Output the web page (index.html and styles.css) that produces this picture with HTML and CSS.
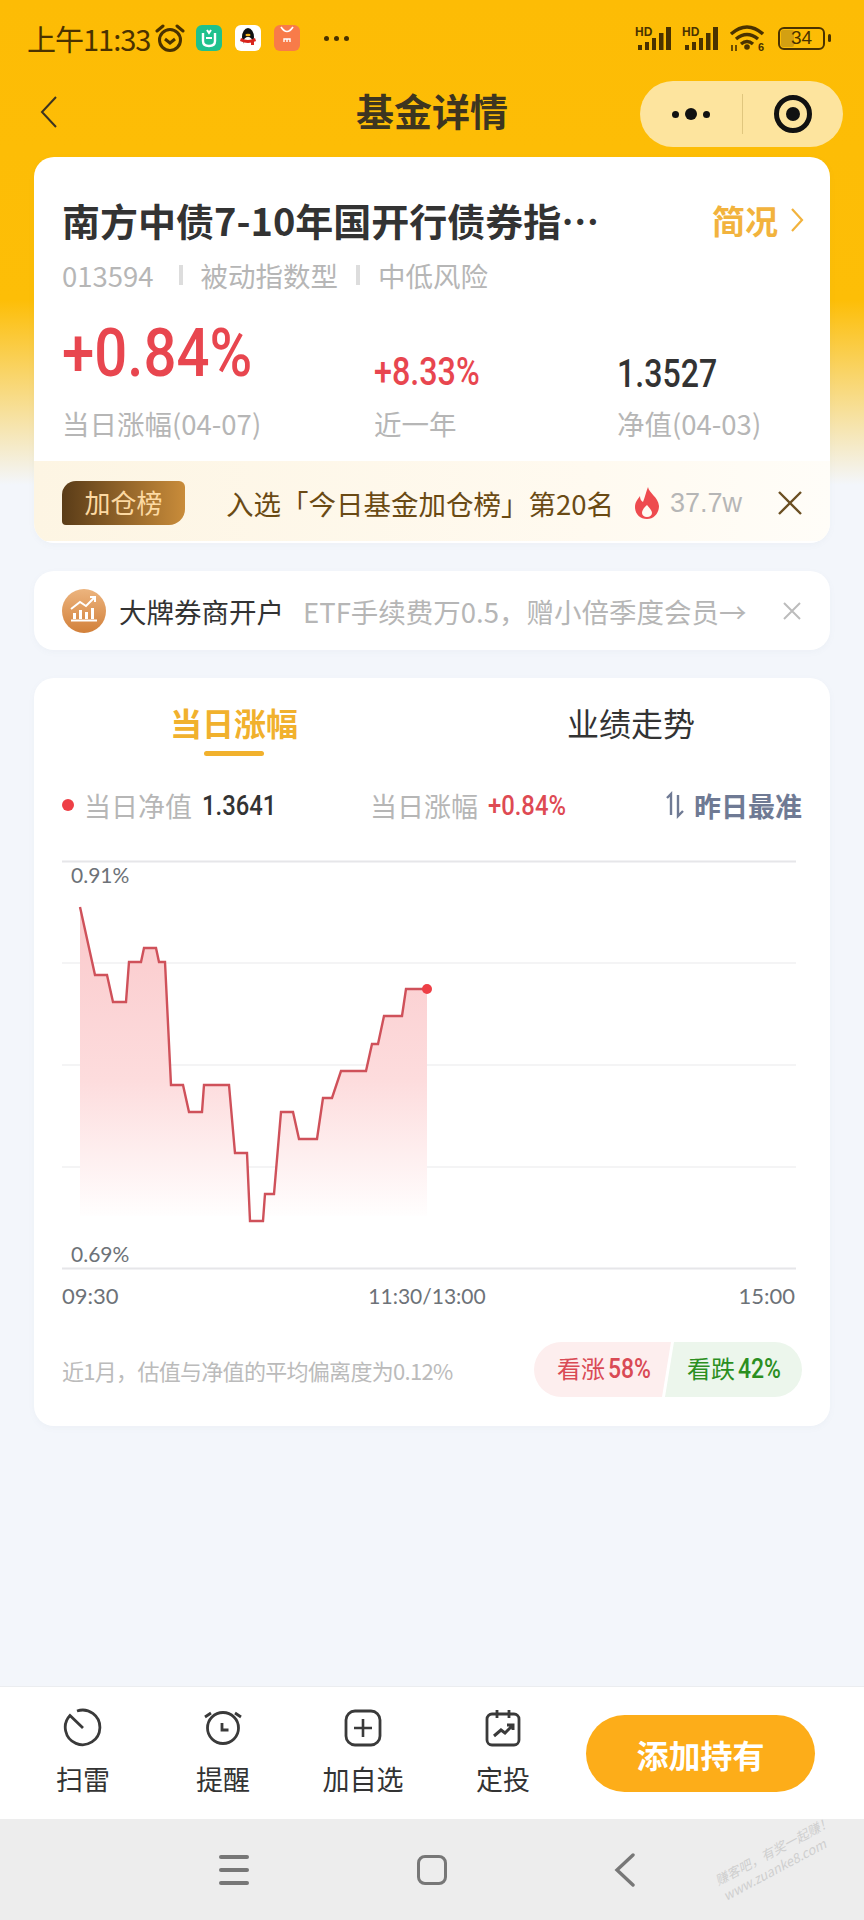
FILE: index.html
```html
<!DOCTYPE html>
<html>
  <head>
    <meta charset="UTF-8">
    <meta name="viewport" content="width=864, user-scalable=no">
    <title>基金详情</title>
    <link rel="stylesheet" href="styles.css">
  </head>
  <body>
    <div class="page">
      <div class="status-bar">
        <div class="status-left">
          <span class="clock">上午11:33</span>
          <svg class="alarm" width="30" height="28" viewBox="0 0 30 28">
            <circle cx="15" cy="16" r="10.5" fill="none" stroke="#4a3200" stroke-width="3"/>
            <path d="M10 15l5 4 5-4" fill="none" stroke="#4a3200" stroke-width="3"/>
            <path d="M2 7l6-5M28 7l-6-5" stroke="#4a3200" stroke-width="3" stroke-linecap="round"/>
          </svg>
          <span class="app-icon app-mi">
            <svg width="26" height="26" viewBox="0 0 26 26">
              <path d="M7 8v8q0 5 6 5t6-5V8" fill="none" stroke="#fff" stroke-width="2.4"/>
              <path d="M11 5l2 3 2-3" fill="none" stroke="#fff" stroke-width="2"/>
              <path d="M10 13h6" stroke="#fff" stroke-width="2"/>
            </svg>
          </span>
          <span class="app-icon app-qq">
            <svg width="26" height="26" viewBox="0 0 26 26">
              <ellipse cx="13" cy="12" rx="6" ry="9" fill="#111"/>
              <ellipse cx="13" cy="17" rx="4.5" ry="5" fill="#fff"/>
              <path d="M6 13q7 4 14 0l1 3q-8 4-16 0z" fill="#d8241c"/>
              <path d="M16 15h3v5h-3z" fill="#d8241c"/>
              <ellipse cx="13" cy="10" rx="2.6" ry="1.3" fill="#f5b21a"/>
            </svg>
          </span>
          <span class="app-icon app-shop">
            <svg width="26" height="26" viewBox="0 0 26 26">
              <path d="M7 2q6 9 12 0" fill="none" stroke="#fff" stroke-width="1.6"/>
              <path d="M10 17v-3h6v3M13 14v3" fill="none" stroke="#fff" stroke-width="1.4"/>
            </svg>
          </span>
          <span class="more-dots"><i></i><i></i><i></i></span>
        </div>
        <div class="status-right">
          <svg width="38" height="26" viewBox="0 0 38 26">
            <text x="0" y="11" class="hd-label">HD</text>
            <path d="M3 20h4v5H3zM10 17h4v8h-4zM17 13h4v12h-4zM24 8h4.500v17h-4.500zM31 2h5v23h-5z" fill="#4a3200"/>
          </svg>
          <svg width="38" height="26" viewBox="0 0 38 26">
            <text x="0" y="11" class="hd-label">HD</text>
            <path d="M3 20h4v5H3zM10 17h4v8h-4zM17 13h4v12h-4zM24 8h4.500v17h-4.500zM31 2h5v23h-5z" fill="#4a3200"/>
          </svg>
          <svg class="wifi" width="36" height="28" viewBox="0 0 36 28">
            <path d="M2 10q16-14 32 0M7 15q11-9 22 0M12 20q6-5 12 0" fill="none" stroke="#4a3200" stroke-width="3.4"/>
            <circle cx="18" cy="23" r="2.8" fill="#4a3200"/>
            <path d="M3 21v6M7 27v-6" stroke="#4a3200" stroke-width="1.6"/>
            <text x="29" y="27" class="wifi-six">6</text>
          </svg>
          <div class="battery"><span class="battery-level"></span><span class="battery-num">34</span></div>
          <span class="battery-nub"></span>
        </div>
      </div>

      <div class="nav-bar">
        <svg class="nav-back" width="20" height="34" viewBox="0 0 20 34">
          <path d="M17 2L3 17l14 15" fill="none" stroke="#3c3320" stroke-width="2"/>
        </svg>
        <div class="nav-title">基金详情</div>
        <div class="capsule">
          <div class="capsule-dots"><i></i><b></b><i></i></div>
          <div class="capsule-line"></div>
          <div class="capsule-target"><span></span></div>
        </div>
      </div>

      <div class="content">
        <div class="card fund-card">
          <div class="fund-head">
            <div class="fund-name">南方中债7-10年国开行债券指…</div>
            <div class="fund-brief">简况
              <svg width="14" height="26" viewBox="0 0 14 26">
                <path d="M2 2l10 11L2 24" fill="none" stroke="#f2b33d" stroke-width="2.2"/>
              </svg>
            </div>
          </div>
          <div class="fund-tags">
            <span>013594</span><i></i><span>被动指数型</span><i></i><span>中低风险</span>
          </div>
          <div class="stats">
            <div class="stat">
              <div class="stat-value stat-big">+0.84%</div>
              <div class="stat-label">当日涨幅(04-07)</div>
            </div>
            <div class="stat">
              <div class="stat-value stat-red">+8.33%</div>
              <div class="stat-label">近一年</div>
            </div>
            <div class="stat">
              <div class="stat-value stat-dark">1.3527</div>
              <div class="stat-label">净值(04-03)</div>
            </div>
          </div>
          <div class="rank-band">
            <span class="rank-badge">加仓榜</span>
            <span class="rank-text">入选「今日基金加仓榜」第20名</span>
            <svg class="flame" width="26" height="32" viewBox="0 0 26 32">
              <path d="M14 0c1 6 10 10 11 19 0 7-5 13-12 13S1 27 1 20c0-5 3-8 5-11 0 3 1 5 3 6 2-5 3-10 5-15zM13 18c-3 3-5 5-5 8 0 2 2 4 5 4s5-2 5-4c0-3-3-5-5-8z" fill="#ee4b4f"/>
            </svg>
            <span class="rank-heat">37.7w</span>
            <svg class="rank-close" width="26" height="26" viewBox="0 0 26 26">
              <path d="M2 2l22 22M24 2L2 24" stroke="#6b4f22" stroke-width="2.4"/>
            </svg>
          </div>
        </div>

        <div class="card promo-card">
          <span class="promo-icon">
            <svg width="44" height="44" viewBox="0 0 44 44">
              <path d="M11 30v-6h3v6zM17 30v-9h3v9zM23 30v-7h3v7zM29 30V19h3v11z" fill="#fff"/>
              <path d="M9 31.500h26" stroke="#fff" stroke-width="2"/>
              <path d="M9 20l9-7 6 4 9-9M28 8h5v5" fill="none" stroke="#fff" stroke-width="2"/>
            </svg>
          </span>
          <span class="promo-title">大牌券商开户</span>
          <span class="promo-text">ETF手续费万0.5，赠小倍季度会员→</span>
          <svg class="promo-close" width="20" height="20" viewBox="0 0 20 20">
            <path d="M2 2l16 16M18 2L2 18" stroke="#bcbcbc" stroke-width="2"/>
          </svg>
        </div>

        <div class="card chart-card">
          <div class="tabs">
            <div class="tab tab-active">当日涨幅</div>
            <div class="tab">业绩走势</div>
          </div>
          <div class="legend">
            <div class="legend-net"><i class="legend-dot"></i><span>当日净值</span><b>1.3641</b></div>
            <div class="legend-rise"><span>当日涨幅</span><b>+0.84%</b></div>
            <div class="legend-best">
              <svg width="20" height="28" viewBox="0 0 20 28">
                <path d="M2 7l4-4v21" fill="none" stroke="#6f7a94" stroke-width="2.4"/>
                <path d="M13 4v21l5-5" fill="none" stroke="#6f7a94" stroke-width="2.4"/>
              </svg>
              <span>昨日最准</span>
            </div>
          </div>
          <svg class="chart" width="734" height="452" viewBox="62 858 734 452">
            <defs>
              <linearGradient id="areaFill" x1="0" y1="0" x2="0" y2="1">
                <stop offset="0" stop-color="#fac9cb"/>
                <stop offset="0.55" stop-color="#fddcdd"/>
                <stop offset="1" stop-color="#ffffff"/>
              </linearGradient>
            </defs>
            <path d="M62 862.500H796" class="grid-edge"/>
            <path d="M62 964H796M62 1066H796M62 1168H796" class="grid-line"/>
            <path d="M62 1269.500H796" class="grid-edge"/>
            <text x="71" y="884" class="axis-pct">0.91%</text>
            <text x="71" y="1263" class="axis-pct">0.69%</text>
            <path d="M80 908L95 976H107L113 1003H126L129 963H141L144 949H156L159 963H165L171 1086H183L189 1113H202L204 1086H229L235 1154H247L250 1222H263L265 1195H274L281 1113H293L299 1140H317L323 1099H332L341 1072H366L372 1045H378L384 1017H402L406 990H427V1217H80Z" fill="url(#areaFill)"/>
            <path d="M80 908L95 976H107L113 1003H126L129 963H141L144 949H156L159 963H165L171 1086H183L189 1113H202L204 1086H229L235 1154H247L250 1222H263L265 1195H274L281 1113H293L299 1140H317L323 1099H332L341 1072H366L372 1045H378L384 1017H402L406 990H427" fill="none" stroke="#cf515a" stroke-width="2.4"/>
            <circle cx="427" cy="990" r="5" fill="#ee3f46"/>
            <text x="62" y="1305" class="axis-time">09:30</text>
            <text x="427" y="1305" class="axis-time axis-mid" text-anchor="middle">11:30/13:00</text>
            <text x="795" y="1305" class="axis-time" text-anchor="end">15:00</text>
          </svg>
          <div class="chart-foot">
            <span class="foot-note">近1月，估值与净值的平均偏离度为0.12%</span>
            <div class="vote">
              <div class="vote-up">看涨<b>58%</b></div>
              <div class="vote-down">看跌<b>42%</b></div>
            </div>
          </div>
        </div>
      </div>

      <div class="action-bar">
        <div class="action">
          <svg width="40" height="40" viewBox="0 0 40 40">
            <path d="M14 3A17.300 17.300 0 1 1 7 7.500L20 20" fill="none" stroke="#3a3a3a" stroke-width="2.800"/>
          </svg>
          <span>扫雷</span>
        </div>
        <div class="action">
          <svg width="40" height="40" viewBox="0 0 40 40">
            <circle cx="20" cy="20" r="15.500" fill="none" stroke="#3a3a3a" stroke-width="2.800"/>
            <path d="M19 15v7h6.500" fill="none" stroke="#3a3a3a" stroke-width="2.800"/>
            <path d="M2 9l6-4M38 9l-6-4" stroke="#3a3a3a" stroke-width="2.800"/>
          </svg>
          <span>提醒</span>
        </div>
        <div class="action">
          <svg width="40" height="40" viewBox="0 0 40 40">
            <rect x="3" y="3" width="34" height="34" rx="9" fill="none" stroke="#3a3a3a" stroke-width="2.800"/>
            <path d="M20 11v18M11 20h18" stroke="#3a3a3a" stroke-width="2.600"/>
          </svg>
          <span>加自选</span>
        </div>
        <div class="action">
          <svg width="40" height="40" viewBox="0 0 40 40">
            <rect x="4" y="6" width="32" height="31" rx="5" fill="none" stroke="#3a3a3a" stroke-width="2.800"/>
            <path d="M14 2v8M26 2v8" stroke="#3a3a3a" stroke-width="2.800"/>
            <path d="M11 28l7-6 4 3 7-7M24 17h6v5" fill="none" stroke="#3a3a3a" stroke-width="3"/>
          </svg>
          <span>定投</span>
        </div>
        <button class="add-btn">添加持有</button>
      </div>

      <div class="system-nav">
        <div class="sys-menu"><i></i><i></i><i></i></div>
        <div class="sys-home"></div>
        <svg width="22" height="34" viewBox="0 0 22 34">
          <path d="M19 2L3 17l16 15" fill="none" stroke="#777" stroke-width="3.400" stroke-linecap="round"/>
        </svg>
        <div class="watermark">赚客吧，有奖一起赚！<br>www.zuanke8.com</div>
      </div>
    </div>
  </body>
</html>
```

FILE: styles.css
```css
* {
  box-sizing: border-box;
}
body {
  margin: 0;
  font-family: "Noto Sans CJK SC", "Noto Sans", sans-serif;
  color: #333;
}
.page {
  position: relative;
  width: 864px;
  height: 1920px;
  display: flex;
  flex-direction: column;
  overflow: hidden;
  background: linear-gradient(#fdbc05 0, #fdbe07 300px, #f3f6fb 485px);
}

/* status bar */
.status-bar {
  height: 76px;
  display: flex;
  justify-content: space-between;
  align-items: center;
  padding: 0 33px 0 27px;
  color: #4a3200;
}
.status-left,
.status-right {
  display: flex;
  align-items: center;
}
.clock {
  width: 128px;
  font-size: 29px;
  line-height: 30px;
  letter-spacing: -1px;
}
.alarm {
  margin-right: 11px;
}
.app-icon {
  width: 26px;
  height: 26px;
  border-radius: 6px;
  margin-right: 13px;
  display: block;
}
.app-mi {
  background: #1fc18d;
}
.app-qq {
  background: #fff;
}
.app-shop {
  background: #f87b49;
}
.more-dots {
  display: flex;
  gap: 5px;
  margin-left: 11px;
}
.more-dots i {
  width: 5px;
  height: 5px;
  border-radius: 50%;
  background: #4a3200;
}
.status-right svg {
  margin-right: 9px;
  overflow: visible;
}
.hd-label {
  font: bold 12px "Liberation Sans", sans-serif;
  fill: #4a3200;
}
.wifi-six {
  font: bold 11px "Liberation Sans", sans-serif;
  fill: #4a3200;
}
.status-right .wifi {
  margin-right: 13px;
}
.battery {
  position: relative;
  width: 47px;
  height: 23px;
  border: 2.5px solid #4a3200;
  border-radius: 6px;
  text-align: center;
}
.battery-level {
  position: absolute;
  left: 1px;
  top: 1px;
  bottom: 1px;
  width: 13px;
  background: #d3a012;
  border-radius: 2px;
}
.battery-num {
  position: relative;
  display: block;
  font: 19px/18px "Liberation Sans", sans-serif;
}
.battery-nub {
  width: 3px;
  height: 8px;
  margin-left: 3px;
  background: #4a3200;
  border-radius: 2px;
}

/* title row */
.nav-bar {
  position: relative;
  height: 81px;
  display: flex;
  align-items: flex-start;
  padding: 5px 21px 0 39px;
  justify-content: space-between;
}
.nav-back {
  margin-top: 14px;
}
.nav-title {
  position: absolute;
  left: 0;
  right: 0;
  top: 9px;
  text-align: center;
  font-size: 38px;
  line-height: 50px;
  font-weight: 700;
  color: #3d3520;
}
.capsule {
  width: 203px;
  height: 66px;
  border-radius: 33px;
  background: #fde49e;
  display: flex;
  align-items: center;
}
.capsule-dots {
  width: 102px;
  display: flex;
  align-items: center;
  justify-content: center;
  gap: 6px;
}
.capsule-dots i {
  width: 7px;
  height: 7px;
  border-radius: 50%;
  background: #111;
}
.capsule-dots b {
  width: 12px;
  height: 12px;
  border-radius: 50%;
  background: #111;
}
.capsule-line {
  width: 1px;
  height: 40px;
  background: #e0c67e;
}
.capsule-target {
  flex: 1;
  display: flex;
  justify-content: center;
}
.capsule-target span {
  width: 38px;
  height: 38px;
  border: 5px solid #111;
  border-radius: 50%;
  display: flex;
  align-items: center;
  justify-content: center;
}
.capsule-target span::after {
  content: "";
  width: 14px;
  height: 14px;
  border-radius: 50%;
  background: #111;
}

/* cards */
.content {
  flex: 1;
  padding: 0 34px;
  display: flex;
  flex-direction: column;
  gap: 28px;
}
.card {
  background: #fff;
  border-radius: 20px;
  box-shadow: 0 2px 6px rgba(120, 130, 160, 0.05);
}
.fund-card {
  height: 386px;
  padding: 38px 0 0;
  overflow: hidden;
}
.fund-head {
  display: flex;
  justify-content: space-between;
  align-items: center;
  padding: 0 26px 0 28px;
}
.fund-name {
  font-size: 38px;
  line-height: 50px;
  font-weight: 700;
  color: #333;
  white-space: nowrap;
}
.fund-brief {
  display: flex;
  align-items: center;
  gap: 12px;
  font-size: 33px;
  line-height: 50px;
  font-weight: 700;
  color: #f2b33d;
}
.fund-tags {
  display: flex;
  align-items: center;
  height: 38px;
  margin-top: 11px;
  padding-left: 28px;
  font-size: 27.5px;
  color: #b6b6b6;
}
.fund-tags i {
  width: 4px;
  height: 20px;
  margin: 0 18px 0 25px;
  background: #ddd;
}
.fund-tags i + span + i {
  margin-left: 18px;
}
.stats {
  display: flex;
  margin-top: 24px;
  padding-left: 28px;
}
.stat:nth-child(1) {
  width: 312px;
}
.stat:nth-child(2) {
  width: 243px;
}
.stat-value {
  height: 80px;
  display: flex;
  align-items: flex-end;
  font-family: Roboto, "Liberation Sans", sans-serif;
  font-weight: 500;
  font-size: 38px;
  line-height: 48px;
  white-space: nowrap;
  transform-origin: 0 100%;
}
.stat-big {
  padding-bottom: 11px;
  font-size: 66px;
  line-height: 66px;
  color: #e8464f;
  transform: scaleX(0.88);
}
.stat-red {
  padding-bottom: 2px;
  color: #e8464f;
  transform: scaleX(0.85);
}
.stat-dark {
  color: #333;
  transform: scaleX(0.845);
}
.stat-label {
  margin-top: 7px;
  font-size: 27.5px;
  line-height: 36px;
  color: #b6b6b6;
}
.rank-band {
  height: 80px;
  margin-top: 20px;
  display: flex;
  align-items: center;
  padding: 4px 0 0 28px;
  background: linear-gradient(90deg, #fdf5e3, #fffaf0 70%, #fffdf8);
}
.rank-badge {
  width: 123px;
  height: 44px;
  border-radius: 14px 6px 16px 4px;
  background: linear-gradient(90deg, #5a3c18, #c98c3a);
  color: #fcd9a2;
  font-size: 26px;
  line-height: 42px;
  text-align: center;
}
.rank-text {
  width: 408px;
  margin-left: 41px;
  font-size: 27.5px;
  color: #6a4a14;
  white-space: nowrap;
}
.rank-heat {
  width: 107px;
  margin-left: 10px;
  font-size: 27px;
  color: #b6b6b6;
  font-family: "Liberation Sans", sans-serif;
}
.promo-card {
  height: 79px;
  display: flex;
  align-items: center;
  padding: 0 28px;
}
.promo-icon {
  width: 44px;
  height: 44px;
  margin-right: 13px;
  border-radius: 50%;
  background: linear-gradient(#ecb47e, #d2803a);
}
.promo-title {
  font-size: 27.5px;
  color: #333;
}
.promo-text {
  flex: 1;
  margin-left: 19px;
  font-size: 27.5px;
  color: #b6b6b6;
  white-space: nowrap;
}
.chart-card {
  height: 748px;
  padding: 0 28px;
}
.tabs {
  display: flex;
  justify-content: space-between;
  height: 78px;
}
.tab {
  position: relative;
  width: 342px;
  padding-top: 21px;
  text-align: center;
  font-size: 32px;
  line-height: 46px;
  color: #333;
}
.tab-active {
  width: 344px;
  color: #f1b12d;
  font-weight: 700;
}
.tab-active::after {
  content: "";
  position: absolute;
  left: 50%;
  bottom: 0;
  width: 60px;
  height: 5px;
  margin-left: -30px;
  border-radius: 3px;
  background: #f1b12d;
}
.legend {
  display: flex;
  align-items: center;
  height: 36px;
  margin-top: 31px;
  font-size: 27px;
  color: #b6b6b6;
}
.legend b {
  margin-left: 10px;
  font-family: Roboto, "Liberation Sans", sans-serif;
  font-size: 28px;
  font-weight: 500;
  transform: scaleX(0.85);
  transform-origin: 0 50%;
}
.legend-net {
  display: flex;
  align-items: center;
  width: 308px;
}
.legend-net b {
  color: #333;
}
.legend-dot {
  width: 12px;
  height: 12px;
  border-radius: 50%;
  background: #ee3f46;
  margin-right: 10px;
}
.legend-rise {
  display: flex;
  align-items: center;
  flex: 1;
}
.legend-rise b {
  color: #de4a53;
}
.legend-best {
  display: flex;
  align-items: center;
  gap: 9px;
  font-weight: 700;
  color: #6f7a94;
}
.chart {
  display: block;
  margin-top: 34px;
}
.grid-edge {
  stroke: #e6e6e9;
  stroke-width: 2;
}
.grid-line {
  stroke: #f1f1f2;
  stroke-width: 1.5;
}
.axis-pct {
  font: 21px "Lato", sans-serif;
  fill: #6d7278;
}
.axis-time {
  font: 22px "Lato", sans-serif;
  fill: #6d7278;
}
.axis-mid {
  font-size: 21px;
}
.chart-foot {
  display: flex;
  align-items: center;
  justify-content: space-between;
  margin-top: 33px;
}
.foot-note {
  font-size: 22px;
  color: #bbb;
  letter-spacing: -0.7px;
}
.vote {
  display: flex;
  width: 268px;
  height: 55px;
}
.vote-up,
.vote-down {
  font-size: 24px;
  line-height: 52px;
  text-align: center;
}
.vote b {
  display: inline-block;
  width: 42px;
  margin-left: 3px;
  text-align: left;
  font-family: Roboto, "Liberation Sans", sans-serif;
  font-size: 27px;
  font-weight: 500;
  transform: scaleX(0.85);
  transform-origin: 0 50%;
}
.vote-up {
  width: 137px;
  padding-left: 2px;
  border-radius: 28px 0 0 28px;
  background: #fdeeee;
  color: #d94a55;
  clip-path: polygon(0 0, 100% 0, calc(100% - 9px) 100%, 0 100%);
}
.vote-down {
  width: 137px;
  margin-left: -6px;
  border-radius: 0 28px 28px 0;
  background: #ecf6ec;
  color: #2b8f1f;
  clip-path: polygon(9px 0, 100% 0, 100% 100%, 0 100%);
}

/* bottom actions */
.action-bar {
  height: 133px;
  display: flex;
  align-items: flex-start;
  padding: 21px 49px 0 13px;
  background: #fff;
  border-top: 1px solid #ebedf0;
}
.action {
  width: 140px;
  display: flex;
  flex-direction: column;
  align-items: center;
  font-size: 27px;
  color: #333;
}
.action span {
  margin-top: 12px;
  line-height: 38px;
}
.add-btn {
  width: 229px;
  height: 77px;
  margin: 7px 0 0 13px;
  border: none;
  border-radius: 39px;
  background: #fdad19;
  color: #fff;
  font-family: inherit;
  font-size: 32px;
  font-weight: 700;
}

/* android buttons */
.system-nav {
  position: relative;
  height: 101px;
  display: flex;
  align-items: center;
  padding: 0 228px 0 219px;
  justify-content: space-between;
  background: #ededed;
}
.sys-menu {
  width: 30px;
  display: flex;
  flex-direction: column;
  gap: 9px;
}
.sys-menu i {
  height: 4px;
  border-radius: 2px;
  background: #777;
}
.sys-home {
  width: 30px;
  height: 30px;
  border: 3.5px solid #777;
  border-radius: 8px;
}
.watermark {
  position: absolute;
  left: 712px;
  top: 22px;
  font-size: 13px;
  line-height: 17px;
  font-style: italic;
  color: #cfcfcf;
  white-space: nowrap;
  transform: rotate(-28deg);
}
```
